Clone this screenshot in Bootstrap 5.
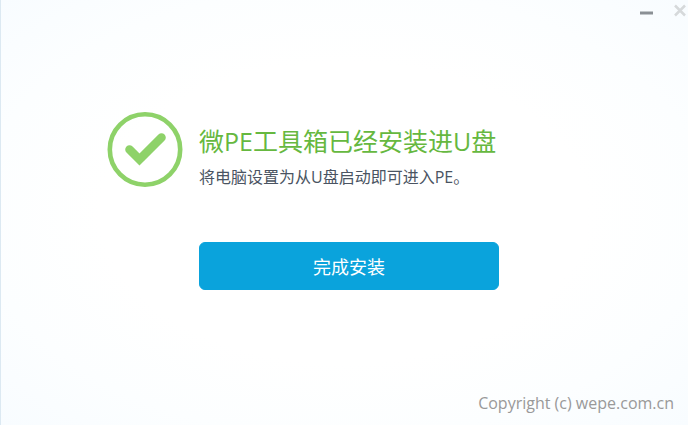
<!DOCTYPE html>
<html lang="zh-CN">
<head>
<meta charset="utf-8">
<meta name="viewport" content="width=device-width, initial-scale=1">
<title>微PE工具箱</title>
<link href="https://cdn.jsdelivr.net/npm/bootstrap@5.3.0/dist/css/bootstrap.min.css" rel="stylesheet">
<style>
body {
  font-family: "Open Sans", "Noto Sans CJK SC", sans-serif;
  background: radial-gradient(ellipse farthest-corner at center, #fff 50%, #fcfeff 75%, #f8fcff 100%);
  border-left: 1px solid #dce9f2;
}
.win-btn { width: 34px; height: 24px; }
.win-btn svg { display: block; }
.result { padding-left: 106px; padding-top: 87px; }
.result-body { width: 300px; }
.result-title { font-size: 25px; line-height: 36px; font-weight: 400; color: #66b840; margin-top: 12px; }
.result-text { font-size: 16px; line-height: 24px; color: #4a5462; margin: 6px 0 53px; }
.btn-finish { --bs-btn-color: #fff; --bs-btn-bg: #0aa3dc; --bs-btn-border-color: #0aa3dc; --bs-btn-hover-color: #fff; --bs-btn-hover-bg: #0994c8; --bs-btn-border-radius: 6px; height: 48px; font-size: 18px; line-height: 24px; padding: 8px 12px 6px; }
.copyright { font-size: 16px; line-height: 24px; color: #999; padding: 0 14px 10px; }
</style>
</head>
<body class="d-flex flex-column min-vh-100">
<header class="d-flex justify-content-end">
  <button type="button" class="win-btn btn p-0 border-0" aria-label="最小化">
    <svg width="34" height="24" aria-hidden="true"><path d="M20 13h13" stroke="#8b9095" stroke-width="3"/></svg>
  </button>
  <button type="button" class="win-btn btn p-0 border-0" aria-label="关闭">
    <svg width="34" height="24" aria-hidden="true"><path d="M21 5.500l10 10m0-10l-10 10" stroke="#d6d9db" stroke-width="2.500"/></svg>
  </button>
</header>
<main class="result d-flex gap-3 flex-grow-1 align-items-start">
  <svg class="flex-shrink-0" width="76" height="76" viewBox="0 0 76 76" fill="none" stroke="#8ed269" aria-hidden="true">
    <circle cx="38" cy="38.500" r="35.200" stroke-width="4.600"/>
    <path d="M22.500 38.500L32.500 48.500L54.500 26.500" stroke-width="8.600" stroke-linecap="round" stroke-linejoin="miter"/>
  </svg>
  <div class="result-body">
    <h1 class="result-title mb-0 text-nowrap">微PE工具箱已经安装进U盘</h1>
    <p class="result-text text-nowrap">将电脑设置为从U盘启动即可进入PE。</p>
    <button type="button" class="btn btn-finish w-100">完成安装</button>
  </div>
</main>
<footer class="copyright text-end">Copyright (c) wepe.com.cn</footer>
<script src="https://cdn.jsdelivr.net/npm/bootstrap@5.3.0/dist/js/bootstrap.bundle.min.js"></script>
</body>
</html>
